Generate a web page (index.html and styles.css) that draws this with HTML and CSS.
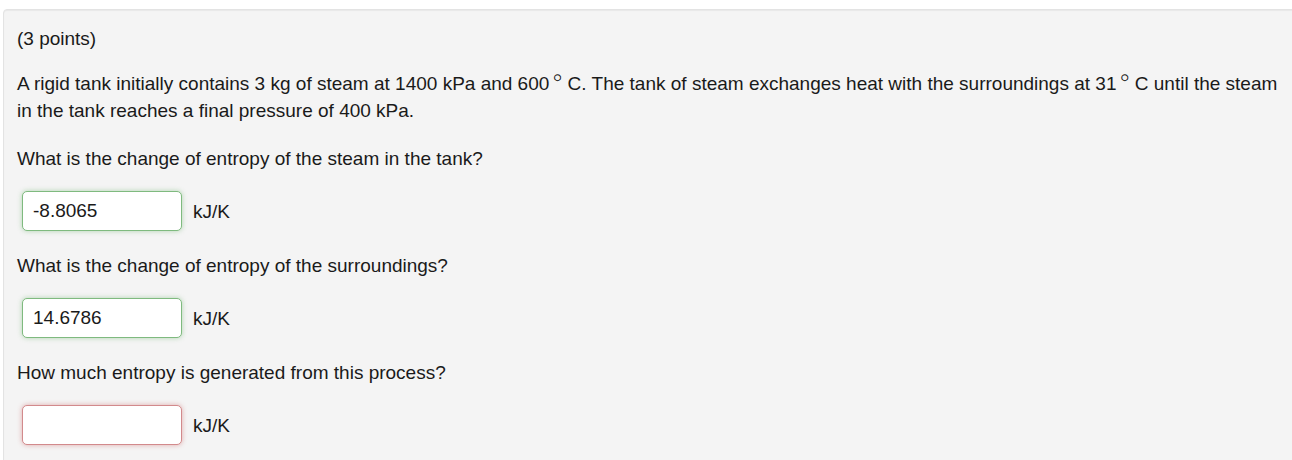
FILE: index.html
```html
<!DOCTYPE html>
<html lang="en">
<head>
<meta charset="utf-8">
<title>Entropy problem</title>
<link rel="stylesheet" href="styles.css">
</head>
<body>
<div class="panel">
  <p class="points">(3 points)</p>
  <p class="statement">A rigid tank initially contains 3 kg of steam at 1400 kPa and 600<span class="deg">∘</span>C. The tank of steam exchanges heat with the surroundings at 31<span class="deg">∘</span>C until the steam in the tank reaches a final pressure of 400 kPa.</p>

  <p class="question">What is the change of entropy of the steam in the tank?</p>
  <div class="answer">
    <input class="field correct" type="text" value="-8.8065">
    <span class="unit">kJ/K</span>
  </div>

  <p class="question">What is the change of entropy of the surroundings?</p>
  <div class="answer">
    <input class="field correct" type="text" value="14.6786">
    <span class="unit">kJ/K</span>
  </div>

  <p class="question">How much entropy is generated from this process?</p>
  <div class="answer">
    <input class="field wrong" type="text" value="">
    <span class="unit">kJ/K</span>
  </div>
</div>
</body>
</html>
```
FILE: styles.css
```css
html, body {
  margin: 0;
  padding: 0;
  background: #ffffff;
  overflow: hidden;
}
body {
  font-family: "Liberation Sans", Arial, sans-serif;
  font-size: 19px;
  line-height: 27px;
  color: #1a1a1a;
}
.panel {
  margin: 9px 0 0 3px;
  width: 1275px;
  padding: 15px 13px 20px 13px;
  background: #f4f4f4;
  border: 1px solid #e3e3e3;
  border-radius: 4px;
  box-shadow: inset 0 1px 1px rgba(0,0,0,0.05);
}
p {
  margin: 0;
}
.points {
  margin-bottom: 18px;
}
.statement {
  margin-bottom: 21px;
}
.question {
  margin-bottom: 19px;
}
.deg {
  font-family: "DejaVu Sans", sans-serif;
  font-weight: 200;
  font-size: 26px;
  vertical-align: 4px;
  line-height: 0;
  margin: 0 2px 0 0;
}
.answer {
  display: flex;
  align-items: center;
  gap: 11px;
  margin: 0 0 21px 5px;
}
.field {
  box-sizing: border-box;
  width: 160px;
  height: 40px;
  padding: 0 10px;
  font-family: "Liberation Sans", Arial, sans-serif;
  font-size: 19px;
  color: #1a1a1a;
  background: #ffffff;
  border: 1px solid #ccc;
  border-radius: 5px;
  outline: none;
}
.field.correct {
  border-color: #7fba7f;
  box-shadow: 0 0 5px rgba(92, 170, 92, 0.45);
}
.field.wrong {
  border-color: #d28a8c;
  box-shadow: 0 0 5px rgba(200, 80, 80, 0.45);
}
.unit {
  color: #1a1a1a;
}
```
